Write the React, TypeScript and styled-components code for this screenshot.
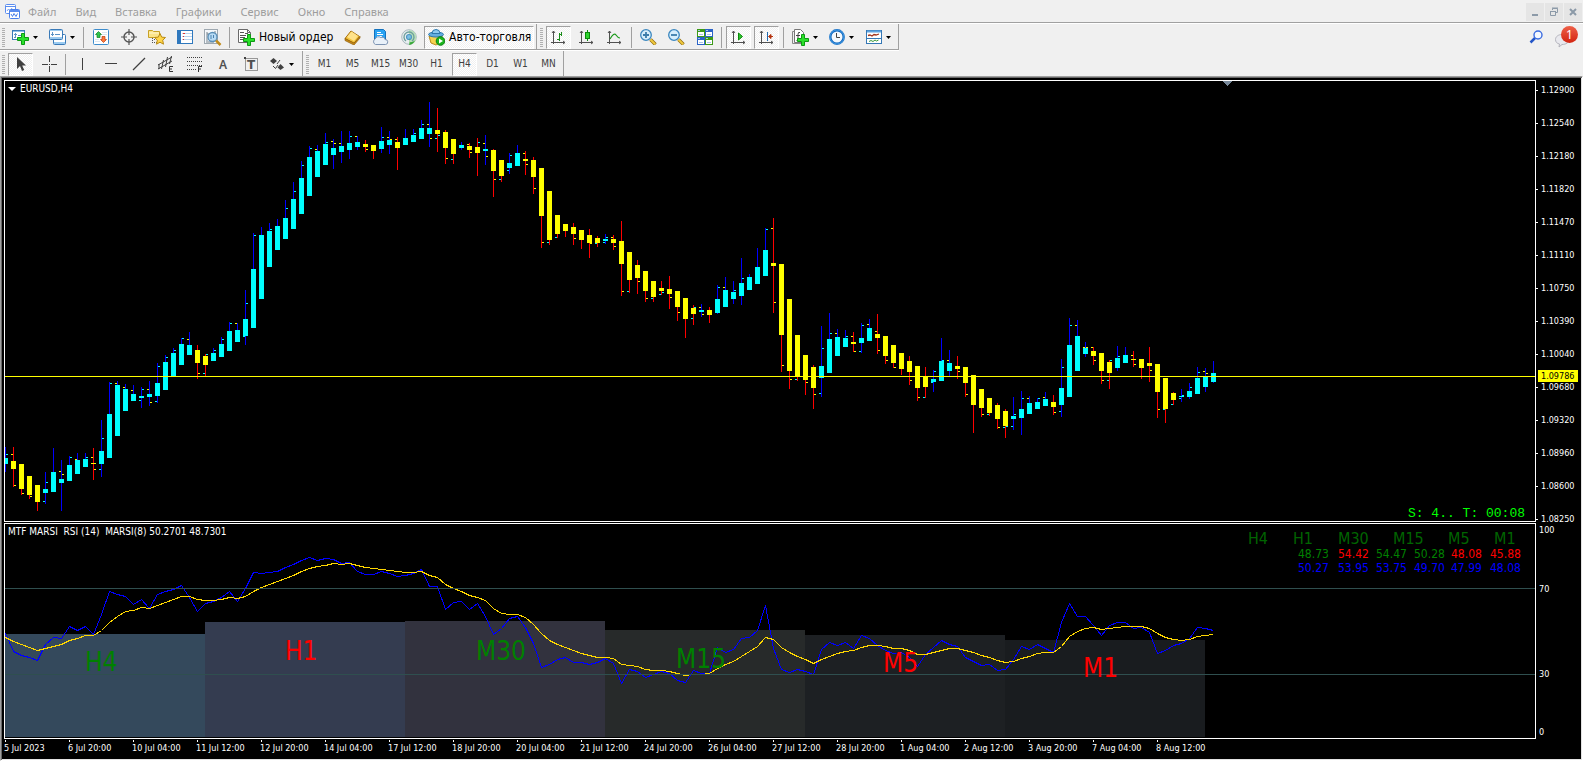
import React from "react";
import styled, { createGlobalStyle, css } from "styled-components";

const UI_FONT = `"Noto Sans", "Open Sans", sans-serif`;
const CHART_FONT = `"DejaVu Sans Condensed", "DejaVu Sans", "Noto Sans", sans-serif`;

const GlobalStyle = createGlobalStyle`
  * { box-sizing: border-box; }
  body { margin: 0; background: #f0f0f0; font-family: ${UI_FONT}; }
  button { font: inherit; color: inherit; background: none; border: 0; padding: 0; margin: 0; }
`;

/* ---------- chart data ---------- */

// bull/bear, body top, body bottom, high, low, open tick, close tick
const CANDLES = `
c 458 464 447 472 - 454c|y 461 469 447 487 454y 485y|y 464 489 464 495 - 493y|y 476 495 476 499 - 496y
y 485 502 485 511 - -|c 489 493 472 504 501c 482c|c 472 492 448 492 - -|c 479 483 460 511 471y 474y
c 465 481 456 481 - 457c|c 460 474 453 474 459y -|c 459 467 453 467 - 457c|y 463 464 448 480 457y 469y
c 451 464 420 477 469c 438c|c 414 458 382 458 - 383c|c 385 436 381 436 383y -|c 389 411 384 411 387y -
c 394 401 385 401 390y -|c 396 398 387 408 400c 389c|c 394 397 381 406 389y 402y|c 383 396 363 403 401c 366c
c 362 390 355 390 - 357c|c 353 376 348 376 - 350c|c 344 365 338 365 - 338c|c 345 355 332 355 339y -
y 350 363 345 379 - 373y|y 356 365 354 376 373c 354c|c 353 361 348 361 - 350c|c 344 357 337 357 - 339c
c 331 351 322 351 - 323c|c 330 342 323 342 323y -|c 319 336 290 345 336c 303c|c 269 328 233 328 - 235c
c 235 299 227 299 - -|c 231 267 223 267 - 229c|c 226 250 219 250 - -|c 218 239 200 239 - 208c
c 199 229 182 229 - 191c|c 178 214 161 214 - 165c|c 157 196 146 196 - 148c|c 151 177 145 177 149y -
c 144 165 133 165 - 142c|c 148 155 139 169 141y 143y|c 146 152 131 163 143y -|c 143 150 131 159 - 136c
c 142 147 136 150 136y -|y 144 147 140 152 - 149y|y 145 151 145 159 - -|c 141 149 127 153 - 137c
c 140 145 131 154 137y 139y|y 142 148 137 170 139y -|c 138 145 129 145 - -|c 135 142 129 142 - 133c
c 128 139 120 139 - 124c|c 128 134 102 147 124y 138y|y 130 134 108 152 138c 135c|y 132 148 130 164 - 158y
y 139 154 139 164 159c -|c 145 148 142 150 - -|y 146 150 143 158 144y 152y|y 147 153 138 176 - 142c
c 149 151 135 165 143y 156y|y 150 171 149 197 - 179y|y 160 176 160 182 179c -|c 163 168 153 174 170c 155c
c 153 166 145 166 - -|y 159 161 151 175 153y 164y|y 160 177 157 194 - 188y|y 168 216 168 248 - 242y
y 191 240 191 245 242c -|y 215 234 215 238 237c -|y 224 231 224 237 - -|y 227 234 223 245 - 238y
y 230 240 230 249 - -|y 235 243 229 258 - 243y|y 238 243 236 247 243c -|c 239 241 234 244 242c 237c
y 239 243 235 250 237y 246y|y 241 264 221 296 - 291y|y 252 280 252 293 291c -|y 265 278 260 294 - 281y
y 271 291 271 302 - 298y|y 281 297 281 302 298c -|y 288 291 281 295 294c 292c|y 289 294 276 309 - 297y
y 291 307 291 321 - 312y|y 298 319 298 338 - -|y 308 314 305 325 318c 307c|c 310 312 304 317 307y 314y
y 310 315 307 323 - -|c 299 313 285 314 - 287c|c 290 307 277 307 287y -|c 292 299 281 304 - 290c
c 283 296 258 305 - 278c|c 277 290 274 290 - -|c 267 284 248 284 - -|c 250 276 228 276 - 229c
y 263 266 218 313 228y 302y|y 264 335 264 372 - 365y|y 299 371 299 389 - 379y|y 335 376 335 381 379c -
y 355 380 355 395 - 382y|y 367 388 365 409 - 394y|c 366 378 326 397 393c 348c|c 339 373 313 373 - 333c
c 337 356 329 356 333y -|c 338 347 330 347 - 336c|y 342 344 332 352 336y 351y|c 338 343 323 353 351c 325c
c 328 341 319 341 324y -|y 334 338 314 354 331y 350y|y 336 356 336 364 - 360y|y 345 363 345 368 - 367y
y 353 369 353 375 - -|y 361 372 356 385 - 380y|y 366 388 366 401 - 397y|y 376 387 367 398 397c -
c 379 382 370 392 382c 371c|c 361 381 338 381 - 360c|c 363 371 350 376 360y -|y 366 369 356 379 - 371y
y 367 383 367 397 - 394y|y 375 405 375 433 - -|y 389 408 389 417 - 414y|y 398 413 398 416 414c -
y 405 419 403 429 - 427y|y 411 426 409 438 427c 426c|c 416 419 397 430 426c 414c|c 409 418 391 435 - 398c
c 403 414 396 414 398y -|c 402 409 398 409 - 398c|c 399 406 392 406 397y -|y 402 407 395 415 - 412y
c 388 405 359 417 411c 367c|c 345 397 318 397 - 325c|c 336 371 320 371 325y -|c 348 354 342 357 347y 347y
y 351 356 347 365 347y 360y|y 353 371 353 384 - 380y|y 362 373 360 389 380c 360c|c 358 368 346 371 - 356c
c 355 363 347 363 - -|y 359 360 351 367 355y 364y|y 359 368 359 379 - -|y 363 366 347 382 - 370y
y 364 392 364 418 - 409y|y 378 409 378 423 409c -|y 393 400 392 405 404c -|c 396 397 389 402 398c 395c
c 391 397 383 399 - 387c|c 378 394 367 394 - 372c|c 376 387 368 392 371y 373y|c 373 382 361 383 - -`
  .trim()
  .split(/[|\n]/)
  .map((row) => row.trim().split(" "));

// Indicator series, in thirds of a pixel
const RSI = [
  340, 393, 405, 412, 421, 374, 352, 355, 319, 330, 319, 344, 283, 214, 223, 229, 253, 239, 266, 224,
  214, 207, 196, 232, 274, 251, 243, 232, 214, 243, 205, 157, 160, 157, 154, 142, 133, 121, 112, 121,
  115, 118, 131, 128, 154, 163, 163, 154, 160, 169, 166, 160, 149, 199, 198, 268, 248, 244, 268, 251,
  290, 343, 325, 296, 289, 322, 370, 441, 433, 417, 411, 427, 427, 433, 427, 415, 430, 490, 448, 454,
  472, 463, 455, 460, 481, 487, 451, 461, 460, 382, 397, 387, 355, 352, 330, 256, 385, 448, 457, 448,
  455, 463, 388, 367, 376, 367, 384, 346, 355, 376, 392, 401, 398, 412, 440, 403, 382, 360, 373, 379,
  412, 423, 437, 433, 451, 448, 418, 379, 387, 373, 384, 397, 307, 250, 289, 289, 316, 346, 316, 307,
  307, 325, 322, 337, 400, 391, 376, 370, 355, 322, 325, 331,
];
const MARSI = [
  351, 364, 373, 382, 391, 385, 379, 373, 361, 355, 346, 346, 331, 307, 289, 275, 271, 262, 265, 256,
  247, 238, 229, 229, 238, 241, 241, 238, 232, 235, 229, 214, 202, 192, 183, 175, 166, 154, 145, 139,
  136, 130, 133, 130, 136, 142, 145, 148, 151, 154, 157, 157, 154, 166, 172, 193, 204, 214, 225, 232,
  241, 264, 280, 283, 283, 293, 312, 341, 361, 373, 382, 391, 400, 406, 412, 412, 415, 433, 436, 439,
  448, 451, 451, 454, 460, 467, 463, 463, 460, 445, 433, 424, 409, 394, 379, 351, 359, 382, 397, 409,
  418, 430, 419, 409, 400, 394, 391, 382, 376, 376, 379, 385, 385, 391, 403, 403, 397, 391, 385, 385,
  391, 397, 406, 412, 421, 427, 424, 415, 409, 400, 397, 397, 378, 349, 335, 325, 322, 328, 325, 322,
  319, 319, 319, 325, 340, 352, 358, 361, 358, 349, 346, 343,
];

const BLOCKS = [
  { name: "H4", top: 110, fill: "#34495c", x: 80, y: 147, color: "#008000" },
  { name: "H1", top: 98, fill: "#343c50", x: 280, y: 136, color: "#ff0000" },
  { name: "M30", top: 97, fill: "#32323e", x: 471, y: 136, color: "#008000" },
  { name: "M15", top: 106, fill: "#272a2a", x: 671, y: 144, color: "#008000" },
  { name: "M5", top: 111, fill: "#1d2023", x: 878, y: 148, color: "#ff0000" },
  { name: "M1", top: 116, fill: "#191c1f", x: 1078, y: 153, color: "#ff0000" },
];

const PRICES = [
  "1.12900", "1.12540", "1.12180", "1.11820", "1.11470", "1.11110", "1.10750",
  "1.10390", "1.10040", "1.09680", "1.09320", "1.08960", "1.08600", "1.08250",
];
const TIMES = [
  "5 Jul 2023", "6 Jul 20:00", "10 Jul 04:00", "11 Jul 12:00", "12 Jul 20:00", "14 Jul 04:00",
  "17 Jul 12:00", "18 Jul 20:00", "20 Jul 04:00", "21 Jul 12:00", "24 Jul 20:00", "26 Jul 04:00",
  "27 Jul 12:00", "28 Jul 20:00", "1 Aug 04:00", "2 Aug 12:00", "3 Aug 20:00", "7 Aug 04:00",
  "8 Aug 12:00",
];
const LEGEND_HEAD: [string, number][] = [["H4", 45], ["H1", 45], ["M30", 55], ["M15", 55], ["M5", 46], ["M1", 29]];
const LEGEND_MA: [string, number, string][] = [
  ["48.73", 40, "#008000"], ["54.42", 38, "#ff0000"], ["54.47", 38, "#008000"],
  ["50.28", 37, "#008000"], ["48.08", 39, "#ff0000"], ["45.88", 33, "#ff0000"],
];
const LEGEND_RSI: [string, number, string][] = [
  ["50.27", 40, "#0000ff"], ["53.95", 38, "#0000ff"], ["53.75", 38, "#0000ff"],
  ["49.70", 37, "#0000ff"], ["47.99", 39, "#0000ff"], ["48.08", 33, "#0000ff"],
];

/* ---------- styled parts ---------- */

const Window = styled.div`
  display: flex;
  flex-direction: column;
  min-height: 100vh;
  background: #f0f0f0;
`;

const MenuBar = styled.header`
  display: flex;
  align-items: center;
  height: 24px;
  padding: 0 1px 0 5px;
  border-bottom: 1px solid #ffffff;
  box-shadow: inset 0 -1px 0 #a0a0a0;
`;

const MenuNav = styled.nav`
  display: flex;
  flex: 1;
  gap: 19px;
  margin-left: 8px;
`;

const MenuItem = styled.button`
  font-size: 11px;
  line-height: 16px;
  color: #9d9d9d;
`;

const WindowControls = styled.div`
  display: flex;
  gap: 1px;
`;

const WindowButton = styled.button`
  display: grid;
  place-items: center;
  width: 18px;
  height: 18px;
  background: #e5e5e5;
`;

const ToolbarRow = styled.div<{ $last?: boolean }>`
  display: flex;
  align-items: stretch;
  height: ${(p) => (p.$last ? 25 : 27)}px;
`;

const Toolbar = styled.div<{ $first?: boolean; $last?: boolean }>`
  display: flex;
  align-items: center;
  gap: 3px;
  padding: 1px 2px 0 ${(p) => (p.$first ? 2 : 3)}px;
  border-right: 1px solid #a0a0a0;
  ${(p) =>
    !p.$last &&
    css`
      border-bottom: 1px solid #a0a0a0;
      margin-bottom: 1px;
      box-shadow: 0 1px 0 #ffffff;
    `}
`;

const Grip = styled.span`
  width: 3px;
  height: 19px;
  background: repeating-linear-gradient(to bottom, #b0b0b0 0 1px, #f0f0f0 1px 2px);
`;

const Divider = styled.span`
  width: 1px;
  height: 21px;
  margin: 0 1px;
  background: #a0a0a0;
`;

const ToolButton = styled.button<{ $pressed?: boolean; $drop?: boolean; $width?: number }>`
  display: flex;
  align-items: center;
  justify-content: ${(p) => (p.$drop || p.$width ? "flex-start" : "center")};
  gap: 4px;
  width: ${(p) => p.$width ?? (p.$drop ? 34 : 25)}px;
  height: 23px;
  padding: 0 ${(p) => (p.$drop || p.$width ? 3 : 0)}px;
  border: 1px solid transparent;
  font-family: ${CHART_FONT};
  font-size: 12px;
  line-height: 16px;
  color: #000000;
  white-space: nowrap;
  ${(p) =>
    p.$pressed &&
    css`
      border-color: #a0a0a0 #ffffff #ffffff #a0a0a0;
      background: repeating-conic-gradient(#ffffff 0 25%, #f0f0f0 0 50%) 0 0 / 2px 2px;
    `}
  svg { flex: none; }
`;

const PeriodButton = styled(ToolButton)`
  font-size: 10px;
  color: #404040;
`;

const ToolbarEnd = styled.div`
  display: flex;
  align-items: center;
  gap: 11px;
  margin-left: auto;
  padding-right: 5px;
`;

const AlertButton = styled.button`
  position: relative;
  display: flex;
  width: 24px;
  height: 22px;
`;

const AlertCount = styled.span`
  position: absolute;
  top: -1px;
  right: 0;
  width: 17px;
  height: 17px;
  border-radius: 50%;
  background: linear-gradient(#ee6048, #d32410);
  color: #ffffff;
  font-size: 12px;
  line-height: 17px;
  text-align: center;
`;

const Workspace = styled.main`
  display: flex;
  flex: 1;
  flex-direction: column;
  padding: 3px 1px 1px 3px;
  border: 1px solid;
  border-color: #a0a0a0 #ffffff #ffffff #a0a0a0;
  background: #000000;
  box-shadow: inset 1px 1px 0 #696969, inset -1px -1px 0 #e3e3e3;
  color: #ffffff;
  font-family: ${CHART_FONT};
  font-size: 9px;
  line-height: 12px;
`;

const Pane = styled.section<{ $height: number }>`
  display: flex;
  height: ${(p) => p.$height}px;
  margin-bottom: 1px;
`;

const Plot = styled.div`
  position: relative;
  flex: 1;
  min-width: 0;
  overflow: hidden;
  border: 1px solid #ffffff;
  > svg { display: block; width: 100%; height: 100%; }
`;

const PlotTitle = styled.div`
  position: absolute;
  top: 2px;
  left: 3px;
  display: flex;
  align-items: center;
  gap: 4px;
  font-size: 10px;
  white-space: pre;
`;

const BarTimer = styled.div`
  position: absolute;
  right: 10px;
  bottom: 0;
  font-family: "Liberation Mono", monospace;
  font-size: 13px;
  line-height: 15px;
  color: #00ff00;
`;

const Legend = styled.div`
  position: absolute;
  top: 7px;
  right: 12px;
  display: flex;
  flex-direction: column;
  align-items: flex-end;
`;

const LegendRow = styled.div<{ $head?: boolean }>`
  display: flex;
  font-size: ${(p) => (p.$head ? 16 : 12)}px;
  line-height: ${(p) => (p.$head ? 16 : 14)}px;
  color: #006400;
`;

const LegendCell = styled.span<{ $width: number; $color?: string }>`
  width: ${(p) => p.$width}px;
  color: ${(p) => p.$color ?? "inherit"};
`;

const PriceAxis = styled.div`
  position: relative;
  display: flex;
  flex-direction: column;
  justify-content: space-between;
  width: 45px;
  margin: 4px 0 -3px;
`;

const PriceLabel = styled.span`
  display: flex;
  align-items: center;
  gap: 3px;
  &::before { content: ""; width: 2px; height: 1px; background: #ffffff; }
`;

const CurrentPrice = styled.span`
  position: absolute;
  top: 286px;
  left: 2px;
  width: 40px;
  padding-left: 3px;
  background: #ffff00;
  color: #000000;
`;

const LevelAxis = styled.div`
  display: grid;
  grid-template-rows: 14fr 103fr 67fr 31fr;
  align-items: center;
  width: 45px;
  padding: 0 0 1px 3px;
  > :last-child { align-self: end; }
`;

const TimeAxis = styled.div`
  display: flex;
  height: 19px;
  overflow: hidden;
  white-space: nowrap;
`;

const TimeLabel = styled.span`
  flex: none;
  width: 64px;
  margin-top: -1px;
  &::before {
    content: "";
    display: block;
    width: 1px;
    height: 3px;
    margin-left: 1px;
    background: #ffffff;
  }
`;

/* ---------- icons ---------- */

const Svg = ({ children, w = 16, h = 16 }: { children: React.ReactNode; w?: number; h?: number }) => (
  <svg width={w} height={h} viewBox={`0 0 ${w} ${h}`} fill="none" aria-hidden="true">
    {children}
  </svg>
);

const Plus = ({ x = 5, y = 4 }: { x?: number; y?: number }) => (
  <path
    transform={`translate(${x} ${y})`}
    d="M4.500.500h3v4h4v3h-4v4h-3v-4h-4v-3h4z"
    fill="#2be02b"
    stroke="#0b9a12"
  />
);

const Arrow = () => (
  <svg width="5" height="3" viewBox="0 0 5 3" aria-hidden="true">
    <path d="M0 0h5L2.5 3z" fill="#000" />
  </svg>
);

const AppIcon = () => (
  <Svg w={15} h={16}>
    <rect x=".5" y=".5" width="10" height="9" rx="1" fill="#fff" stroke="#5b8def" />
    <path d="M1 2.500h9" stroke="#5b8def" />
    <path d="M2 7l1.500-2L5 7l2-3" stroke="#7ba3f0" />
    <rect x="4.500" y="5.500" width="10" height="9" rx="1" fill="#fff" stroke="#4a80ea" />
    <path d="M5 7h9" stroke="#5b8def" strokeWidth="2" />
    <path d="M6 10l1.500 2.500L9 9.500l2 3 1.500-3" stroke="#4a80ea" />
  </Svg>
);

const NewChart = () => (
  <Svg w={17}>
    <rect x=".5" y="1.500" width="12" height="9" fill="#fff" stroke="#3a7ab8" />
    <path d="M1 2.500h11" stroke="#8fc0e8" />
    <path d="M3.500 4v5M2 5.500h3M2 8.500h2M6 6.500h4" stroke="#5a92c4" />
    <Plus />
  </Svg>
);

const Profiles = () => (
  <Svg w={17}>
    <rect x="4.500" y="5.500" width="12" height="10" rx="1" fill="#fff" stroke="#3a7ab8" />
    <path d="M5 14h11" stroke="#9bcbf0" strokeWidth="2" />
    <rect x=".5" y=".5" width="13" height="10" rx="1" fill="#fff" stroke="#3a7ab8" />
    <path d="M1 9h12" stroke="#9bcbf0" strokeWidth="2" />
    <path d="M1 1.500h12" stroke="#9bcbf0" />
    <path d="M3.500 3v4M2 5.500h3M6 5.500h5" stroke="#5a92c4" />
  </Svg>
);

const MarketWatch = () => (
  <Svg>
    <rect x=".5" y=".5" width="15" height="15" rx="1" fill="#fff" stroke="#3d8ccc" />
    <path d="M9 3.500h5M9 5.500h5M2 10.500h4M2 12.500h5" stroke="#dbe7f1" />
    <path d="M5.500 2.500l3 3H7v3H4v-3H2.500z" fill="#2fc44c" stroke="#0c7f22" strokeWidth=".7" />
    <path d="M10.500 13.500l3-3H12v-3H9v3H7.500z" fill="#ff7a3b" stroke="#b8390d" strokeWidth=".7" />
  </Svg>
);

const Target = () => (
  <Svg>
    <circle cx="8" cy="8" r="5" stroke="#555" strokeWidth="1.400" />
    <path d="M8 0v6M8 10v6M0 8h6M10 8h6" stroke="#555" strokeWidth="1.200" />
  </Svg>
);

const FolderStar = () => (
  <Svg w={18}>
    <path d="M.5 1.500h4l1 1h6v6H.5z" fill="#fbe48a" stroke="#c7a126" />
    <path d="M1 4h10" stroke="#fff6cf" />
    <path d="M4.500 9v6M6 13.500h3M6 10.500h2" stroke="#555" strokeDasharray="1 1" />
    <path d="M12 4.500l1.700 3.600 3.800.4-2.800 2.700.8 4-3.500-2-3.500 2 .8-4-2.800-2.700 3.800-.4z" fill="#ffd54a" stroke="#b88a14" />
  </Svg>
);

const Navigator = () => (
  <Svg>
    <rect x=".5" y="1.500" width="15" height="13" fill="#fff" stroke="#2f78bd" />
    <path d="M2.500 2v12" stroke="#2f78bd" strokeWidth="3" />
    <path d="M5 4.500h10M5 7.500h10M5 10.500h10" stroke="#b7d3ee" />
    <path d="M6 4.500h2M6 7.500h1M6 10.500h1" stroke="#d33" />
  </Svg>
);

const Tester = () => (
  <Svg w={18} h={17}>
    <rect x=".5" y=".5" width="13" height="14" fill="#f5f8fb" stroke="#9ea8b0" />
    <path d="M3 3v9M11 2v3M3 5h3M2 13h8" stroke="#77838c" />
    <circle cx="8.500" cy="8" r="4.500" fill="#b9dcf5" stroke="#5a8fb8" strokeWidth="1.300" />
    <path d="M7 6v4M9.500 6v3" stroke="#4b82b0" />
    <path d="M12 11.500l4.500 4.500" stroke="#c08c1c" strokeWidth="2.500" />
  </Svg>
);

const NewOrder = () => (
  <Svg w={17} h={17}>
    <path d="M.5.500h9l3 3v10H.5z" fill="#fff" stroke="#6a6a6a" />
    <path d="M9.500.500v3h3" stroke="#6a6a6a" />
    <path d="M2 3.500h4M2 6.500h6M2 8.500h5M2 10.500h4M7 4.500h3" stroke="#555" />
    <Plus y={5} />
  </Svg>
);

const GoldBook = () => (
  <Svg w={17}>
    <path d="M1 9.500l6-7.500 8.500 5.500L10 14.500z" fill="#f3c33c" stroke="#a8700d" />
    <path d="M3 8l4.500-5.500L14 7l-4 5z" fill="#ffe28a" />
    <path d="M1 9.500v2l9 4.500 6-7v-1.500L10 14z" fill="#c98a16" stroke="#8d5c08" strokeWidth=".7" />
  </Svg>
);

const Cloud = () => (
  <Svg w={17}>
    <path d="M2.500.500h9l2 2v8h-11z" fill="#2aa3f3" stroke="#1572bd" />
    <path d="M5 3.500h4M5 5.500h6M5 7.500h5" stroke="#fff" />
    <path d="M3.500 15.500a3 3 0 01-.3-5.500 3.500 3.500 0 015.500-1.500 3 3 0 014.300 2 2.500 2.500 0 01.5 5z" fill="#e9f1f9" stroke="#7d94b3" />
  </Svg>
);

const Signal = () => (
  <Svg>
    <circle cx="8" cy="8" r="7.300" fill="#e8eef0" stroke="#a9b9bf" />
    <path d="M8 1a7 7 0 010 14.500V8z" fill="#b7dfb9" />
    <path d="M5 12a5 5 0 116 0" stroke="#6f9f9c" strokeWidth="1.400" />
    <circle cx="8" cy="8" r="2.500" fill="#7cc0e8" stroke="#4f96c0" strokeWidth="1.200" />
    <path d="M8 8c1.500 3 .8 6 0 8 3-.5 5-2 6-4.500-2 1.500-4 2-5 1.500z" fill="#38a838" />
  </Svg>
);

const Robot = () => (
  <Svg w={17} h={17}>
    <path d="M1 7h13l-2 7-4 2-5-2z" fill="#f6d24f" stroke="#b88d1c" />
    <ellipse cx="8" cy="5.500" rx="7.500" ry="2.500" fill="#64aee0" stroke="#2e78ad" />
    <path d="M4 4.500a4 4 0 018 0z" fill="#8fcaf0" stroke="#2e78ad" />
    <circle cx="12.500" cy="12" r="4.300" fill="#1db51d" stroke="#0a7f12" />
    <path d="M11 9.500v5l4-2.500z" fill="#fff" />
  </Svg>
);

const Axes = ({ children }: { children: React.ReactNode }) => (
  <Svg w={15} h={15}>
    <path d="M2.500 1v13M0 12.500h14M1 3l1.500-2L4 3M12 11l2 1.500-2 1.500" stroke="#505050" />
    {children}
  </Svg>
);

const Lens = ({ minus }: { minus?: boolean }) => (
  <Svg w={17}>
    <path d="M10.500 10.500l5 5" stroke="#8f6b10" strokeWidth="3.400" />
    <path d="M10.500 10.500l4.700 4.700" stroke="#f0c93f" strokeWidth="2" />
    <circle cx="6" cy="6" r="5.300" fill="#d6eefc" stroke="#3b87bf" strokeWidth="1.300" />
    <path d={minus ? "M3 6h6" : "M3 6h6M6 3v6"} stroke="#3b7cab" strokeWidth="1.800" />
  </Svg>
);

const Tiles = () => (
  <Svg>
    {[
      [0, 0, "#3c9a17"],
      [8, 0, "#2a63c7"],
      [0, 8, "#2a63c7"],
      [8, 8, "#3c9a17"],
    ].map(([x, y, c], i) => (
      <g key={i} transform={`translate(${x} ${y})`}>
        <rect width="8" height="8" fill={c as string} />
        <path d="M1 3h6v4H1z" fill="#fff" />
        <path d="M2 5.500h4M1 1.500h2" stroke="#a9c2e8" />
      </g>
    ))}
  </Svg>
);

const Indicators = () => (
  <Svg w={17} h={17}>
    <path d="M2.500.500h6l3 3v10h-9z" fill="#fff" stroke="#777" />
    <path d="M.5 2.500h2M.5 2.500v12h9" stroke="#888" />
    <path d="M8 3.500q-2-1-2 2v5q0 1-1.500 1M4 6.500h4" stroke="#444" />
    <Plus y={5} />
  </Svg>
);

const Clock = () => (
  <Svg>
    <circle cx="8" cy="8" r="6.700" fill="#f4f9fd" stroke="#1269c0" strokeWidth="2.400" />
    <circle cx="8" cy="8" r="7" stroke="#58b0f2" strokeWidth=".7" />
    <path d="M7.500 4v4.500H11" stroke="#444" />
  </Svg>
);

const Template = () => (
  <Svg>
    <rect x=".5" y="1.500" width="15" height="13" fill="#fff" stroke="#3477b5" />
    <path d="M1 2.500h14" stroke="#5fa4df" strokeWidth="2" />
    <path d="M1 9.500h14" stroke="#3477b5" />
    <path d="M2 6.500l2-.5 2 1 2-1.500 2 .5 3-1" stroke="#a3341a" strokeWidth="1.300" />
    <path d="M3 12.500l2-1 2 1 2-1.500 1.500 1 2-1" stroke="#3a9a3a" />
  </Svg>
);

const Pointer = () => (
  <Svg w={10} h={16}>
    <path d="M1 1v12l3-3 2 5 2.200-1-2-4.600H10z" fill="#404040" />
  </Svg>
);
const Cross = () => (
  <Svg>
    <path d="M8.500 0v6M8.500 10v6M1 8.500h6M10 8.500h6M8 8.500h1" stroke="#404040" />
  </Svg>
);
const VLine = () => <Svg><path d="M7.500 2v12" stroke="#404040" /></Svg>;
const HLine = () => <Svg><path d="M2 7.500h12" stroke="#404040" /></Svg>;
const Slant = () => <Svg><path d="M2 14L14 2" stroke="#404040" strokeWidth="1.200" /></Svg>;
const Channel = () => (
  <Svg w={17}>
    <path d="M0 9L14 1M0 13L14 5M3.500 13l2-9M7.500 11l2-10M11.500 8l2-8M1 8v5" stroke="#404040" />
    <path d="M15 10.500h-3.500v5H15M11.500 13H14" stroke="#333" />
  </Svg>
);
const Fibo = () => (
  <Svg>
    <path d="M0 1.500h15M0 5.500h15M0 9.500h15M0 13.500h9" stroke="#404040" strokeDasharray="1 1" />
    <path d="M11.500 16v-5.500H15M11.500 13H14" stroke="#333" />
  </Svg>
);
const Letter = ({ boxed }: { boxed?: boolean }) => (
  <Svg>
    {boxed && <rect x="2.500" y="2.500" width="12" height="12" stroke="#404040" strokeDasharray="1 1" />}
    {boxed && <path d="M1 1h2v2H1z" fill="#404040" />}
    <text
      x="8"
      y="13"
      textAnchor="middle"
      fontFamily={boxed ? "DejaVu Sans" : "Noto Sans"}
      fontSize="12"
      fontWeight={boxed ? "bold" : 600}
      fill="#505050"
    >
      {boxed ? "T" : "A"}
    </text>
  </Svg>
);
const Shapes = () => (
  <Svg w={15} h={14}>
    <path d="M3.500 1L7 4 3.500 7 0 4z" fill="#404040" />
    <path d="M10.500 7L14 10.500 10.500 13 7.500 10.500z" fill="#404040" />
    <path d="M7 7l3-4M3 9l2.500 2.500L8 8" stroke="#404040" />
  </Svg>
);

const Triangle = () => (
  <svg width="8" height="4" viewBox="0 0 8 4" aria-hidden="true">
    <path d="M0 0h8L4 4z" fill="#fff" />
  </svg>
);

/* ---------- charts ---------- */

const tickColor = (t: string) => (t.endsWith("c") ? "#00ffff" : "#ffff00");

const PriceChart = () => (
  <svg shapeRendering="crispEdges" role="img" aria-label="EURUSD">
    <g transform="translate(0 -81)">
      {CANDLES.map(([kind, top, bottom, high, low, open, close], i) => {
        const x = i * 8;
        const bull = kind === "c";
        return (
          <g key={i}>
            <rect x={x} y={high} width="1" height={+low - +high} fill={bull ? "#0000ff" : "#ff0000"} />
            <rect x={x - 2} y={top} width="5" height={+bottom - +top} fill={bull ? "#00ffff" : "#ffff00"} />
            {open !== "-" && <rect x={x - 2} y={parseInt(open)} width="2" height="1" fill={tickColor(open)} />}
            {close !== "-" && <rect x={x + 1} y={parseInt(close)} width="2" height="1" fill={tickColor(close)} />}
          </g>
        );
      })}
      <rect x="0" y="376" width="100%" height="1" fill="#ffff00" />
      <path d="M1218 81h9l-4.500 5z" fill="#778899" />
    </g>
  </svg>
);

// Points sit at pixel centres so that one-pixel strokes stay on their row
const points = (series: number[]) =>
  series.map((v, i) => `${i * 8 + 0.5},${Math.floor(v / 3) - 3.5}`).join(" ");

const IndicatorChart = () => (
  <svg shapeRendering="crispEdges" role="img" aria-label="MTF MARSI">
    {BLOCKS.map((b, i) => (
      <rect key={b.name} x={i * 200} y={b.top} width="200" height={213 - b.top} fill={b.fill} />
    ))}
    <polyline points={points(RSI)} fill="none" stroke="#0000ff" />
    <polyline points={points(MARSI)} fill="none" stroke="#ffd700" />
    <rect y="64" width="100%" height="1" fill="#2f4f4f" />
    <rect y="150" width="100%" height="1" fill="#2f4f4f" />
    {BLOCKS.map((b) => (
      <text key={b.name} x={b.x} y={b.y} fill={b.color} fontSize="26" fontFamily="DejaVu Sans Condensed, DejaVu Sans">
        {b.name}
      </text>
    ))}
  </svg>
);

/* ---------- page ---------- */

const Tool = ({ name, icon, pressed, drop }: { name: string; icon: React.ReactNode; pressed?: boolean; drop?: boolean }) => (
  <ToolButton type="button" aria-label={name} $pressed={pressed} $drop={drop}>
    {icon}
    {drop && <Arrow />}
  </ToolButton>
);

export default function App() {
  return (
    <Window>
      <GlobalStyle />
      <MenuBar>
        <AppIcon />
        <MenuNav>
          {["Файл", "Вид", "Вставка", "Графики", "Сервис", "Окно", "Справка"].map((m) => (
            <MenuItem key={m} type="button">{m}</MenuItem>
          ))}
        </MenuNav>
        <WindowControls>
          <WindowButton type="button" aria-label="Свернуть">
            <Svg w={10} h={10}><path d="M2 8h6" stroke="#8c9aa8" strokeWidth="2" /></Svg>
          </WindowButton>
          <WindowButton type="button" aria-label="Восстановить">
            <Svg w={10} h={10}>
              <path d="M3.500 3V1.500h5v4H7M1.500 4.500h5v4h-5zM3 1h6M1 4.500h6" stroke="#8c9aa8" />
            </Svg>
          </WindowButton>
          <WindowButton type="button" aria-label="Закрыть">
            <Svg w={10} h={10}><path d="M2 2l6 6M8 2L2 8" stroke="#8c9aa8" strokeWidth="2" /></Svg>
          </WindowButton>
        </WindowControls>
      </MenuBar>

      <ToolbarRow>
        <Toolbar $first>
          <Grip />
          <Tool name="Новый график" icon={<NewChart />} drop />
          <Tool name="Профили" icon={<Profiles />} drop />
          <Divider />
          <Tool name="Обзор рынка" icon={<MarketWatch />} />
          <Tool name="Окно данных" icon={<Target />} />
          <Tool name="Навигатор" icon={<FolderStar />} />
          <Tool name="Терминал" icon={<Navigator />} />
          <Tool name="Тестер стратегий" icon={<Tester />} />
          <Divider />
          <ToolButton type="button" $width={103}><NewOrder />Новый ордер</ToolButton>
          <Tool name="MetaEditor" icon={<GoldBook />} />
          <Tool name="Хостинг" icon={<Cloud />} />
          <Tool name="Сигналы" icon={<Signal />} />
          <ToolButton type="button" $width={110} $pressed><Robot />Авто-торговля</ToolButton>
        </Toolbar>
        <Toolbar>
          <Grip />
          <Tool name="Бары" pressed icon={<Axes><path d="M8.500 3v8M8.500 4.500H11M6 9.500h2.500M10.500 2v4" stroke="#1a8c1a" /></Axes>} />
          <Tool name="Свечи" icon={<Axes><path d="M8.500 0v11" stroke="#0a8a0a" /><rect x="6.500" y="2.500" width="4" height="6" fill="#2fd42f" stroke="#0a8a0a" /></Axes>} />
          <Tool name="Линия" icon={<Axes><path d="M3 9q4-7 6-4t4 3" stroke="#1a9a1a" strokeWidth="1.200" /></Axes>} />
          <Divider />
          <Tool name="Увеличить" icon={<Lens />} />
          <Tool name="Уменьшить" icon={<Lens minus />} />
          <Tool name="Плитка" icon={<Tiles />} />
          <Divider />
          <Tool name="Автопрокрутка" pressed icon={<Axes><path d="M7.500 3v7l4-3.500z" fill="#2fc42f" stroke="#0a8a0a" /></Axes>} />
          <Tool name="Сдвиг графика" pressed icon={<Axes><path d="M8.500 2v9" stroke="#1f6ab0" /><path d="M14 6.500H10M12 4.500L9.500 6.500l2.500 2z" fill="#b4330f" stroke="#b4330f" /></Axes>} />
          <Divider />
          <Tool name="Индикаторы" icon={<Indicators />} drop />
          <Tool name="Периоды" icon={<Clock />} drop />
          <Tool name="Шаблоны" icon={<Template />} drop />
        </Toolbar>
        <ToolbarEnd>
          <button type="button" aria-label="Поиск">
            <Svg w={14} h={14}>
              <path d="M1.500 12.500l5-5" stroke="#2456c8" strokeWidth="2.500" />
              <circle cx="9" cy="5" r="4" fill="#f5f9ff" stroke="#3a6be0" strokeWidth="1.400" />
            </Svg>
          </button>
          <AlertButton type="button">
            <svg width="16" height="22" viewBox="0 0 16 22" fill="none" aria-hidden="true">
              <path d="M8 7.500c4 0 7 2 7 5s-3 5-7 5l-3 2.500.5-3C3 16.500 1.500 15 1.500 12.500c0-3 3-5 6.500-5z" fill="#e9e9ee" stroke="#b4b4bc" />
            </svg>
            <AlertCount>1</AlertCount>
          </AlertButton>
        </ToolbarEnd>
      </ToolbarRow>

      <ToolbarRow $last>
        <Toolbar $first $last>
          <Grip />
          <Tool name="Курсор" icon={<Pointer />} pressed />
          <Tool name="Перекрестие" icon={<Cross />} />
          <Divider />
          <Tool name="Вертикальная линия" icon={<VLine />} />
          <Tool name="Горизонтальная линия" icon={<HLine />} />
          <Tool name="Трендовая линия" icon={<Slant />} />
          <Tool name="Канал" icon={<Channel />} />
          <Tool name="Фибоначчи" icon={<Fibo />} />
          <Tool name="Текст" icon={<Letter />} />
          <Tool name="Метка" icon={<Letter boxed />} />
          <Tool name="Стрелки" icon={<Shapes />} drop />
        </Toolbar>
        <Toolbar $last>
          <Grip />
          {["M1", "M5", "M15", "M30", "H1", "H4", "D1", "W1", "MN"].map((p) => (
            <PeriodButton key={p} type="button" $pressed={p === "H4"}>{p}</PeriodButton>
          ))}
        </Toolbar>
      </ToolbarRow>

      <Workspace>
        <Pane $height={442}>
          <Plot>
            <PriceChart />
            <PlotTitle><Triangle />EURUSD,H4</PlotTitle>
            <BarTimer>S: 4.. T: 00:08</BarTimer>
          </Plot>
          <PriceAxis>
            {PRICES.map((p) => <PriceLabel key={p}>{p}</PriceLabel>)}
            <CurrentPrice>1.09786</CurrentPrice>
          </PriceAxis>
        </Pane>
        <Pane $height={216}>
          <Plot>
            <IndicatorChart />
            <PlotTitle>{"MTF MARSI  RSI (14)  MARSI(8) 50.2701 48.7301"}</PlotTitle>
            <Legend>
              <LegendRow $head>
                {LEGEND_HEAD.map(([t, w]) => <LegendCell key={t} $width={w}>{t}</LegendCell>)}
              </LegendRow>
              {[LEGEND_MA, LEGEND_RSI].map((row, r) => (
                <LegendRow key={r}>
                  {row.map(([t, w, c], i) => <LegendCell key={i} $width={w} $color={c}>{t}</LegendCell>)}
                </LegendRow>
              ))}
            </Legend>
          </Plot>
          <LevelAxis>
            <span>100</span>
            <span>70</span>
            <span>30</span>
            <span>0</span>
          </LevelAxis>
        </Pane>
        <TimeAxis>
          {TIMES.map((t) => <TimeLabel key={t}>{t}</TimeLabel>)}
        </TimeAxis>
      </Workspace>
    </Window>
  );
}
